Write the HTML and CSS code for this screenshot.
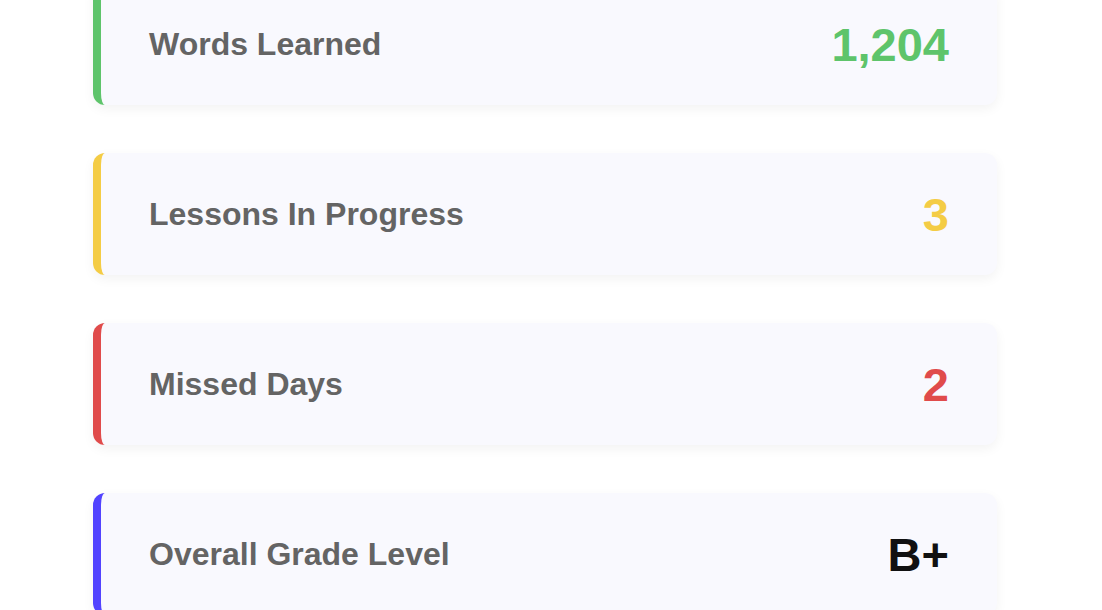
FILE: index.html
```html
<!DOCTYPE html>
<html lang="en">
<head>
<meta charset="utf-8">
<title>Stats</title>
<link rel="stylesheet" href="styles.css">
</head>
<body>
<main class="stats">
  <div class="stat stat-green">
    <span class="label">Words Learned</span>
    <span class="value">1,204</span>
  </div>
  <div class="stat stat-yellow">
    <span class="label">Lessons In Progress</span>
    <span class="value">3</span>
  </div>
  <div class="stat stat-red">
    <span class="label">Missed Days</span>
    <span class="value">2</span>
  </div>
  <div class="stat stat-blue">
    <span class="label">Overall Grade Level</span>
    <span class="value">B+</span>
  </div>
</main>
</body>
</html>
```

FILE: styles.css
```css
html, body {
  margin: 0;
  padding: 0;
  background: #ffffff;
  overflow: hidden;
}

body {
  font-family: "Liberation Sans", Arial, Helvetica, sans-serif;
}

.stats {
  display: flex;
  flex-direction: column;
  gap: 48px;
  width: 904px;
  margin: -17px 0 0 93px;
}

.stat {
  box-sizing: border-box;
  height: 122px;
  display: flex;
  align-items: center;
  justify-content: space-between;
  padding: 0 48px 0 48px;
  background: #f9f9fe;
  border-left: 8px solid #5ec46b;
  border-radius: 12px;
  box-shadow: 0 4px 12px rgba(0, 0, 0, 0.05);
}

.label {
  font-size: 32px;
  font-weight: 700;
  color: #646464;
}

.value {
  font-size: 47px;
  font-weight: 700;
  line-height: 1;
}

.stat-green { border-left-color: #5ec46b; }
.stat-green .value { color: #5ec46b; }

.stat-yellow { border-left-color: #f4cc45; }
.stat-yellow .value { color: #f4cc45; }

.stat-red { border-left-color: #e04b4b; }
.stat-red .value { color: #e04b4b; }

.stat-blue { border-left-color: #5243ff; }
.stat-blue .value { color: #111111; }
```
